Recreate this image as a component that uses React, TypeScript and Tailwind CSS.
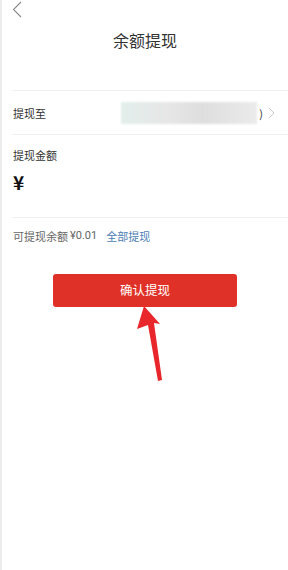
import React from "react";

const font = {
  fontFamily: '"Noto Sans CJK SC", "Noto Sans", sans-serif',
};

export default function App() {
  return (
    <div
      className="relative flex h-[570px] w-[288px] overflow-hidden bg-white"
      style={font}
    >
      {/* left edge strip */}
      <div className="w-[2px] shrink-0 bg-[#ececec]" />

      <div className="flex flex-1 flex-col">
        {/* Header */}
        <header className="flex h-[90px] flex-col">
          <svg
            width="12"
            height="17"
            viewBox="0 0 12 17"
            className="ml-[9px] mt-[1px]"
          >
            <path
              d="M10 1 L2.5 8.5 L10 16"
              fill="none"
              stroke="#8a8a8a"
              strokeWidth="1.1"
            />
          </svg>
          <h1 className="mt-[11px] text-center text-[16px] leading-[22px] text-[#333333]">
            余额提现
          </h1>
        </header>

        <div className="ml-[10px]">
          <div className="h-px bg-[#f0f0f0]" />

          {/* 提现至 */}
          <div className="flex h-[43px] items-center pl-px pr-[13px]">
            <span className="text-[11px] leading-4 text-[#333333]">提现至</span>
            <div className="ml-auto h-[22px] w-[136px] bg-[linear-gradient(90deg,#e3efec_0%,#e6e6e6_35%,#dedede_60%,#ebebeb_100%)] blur-[1px]" />
            <span className="ml-[2px] text-[11px] leading-4 text-[#333333]">)</span>
            <svg width="7" height="12" viewBox="0 0 7 12" className="ml-[5px]">
              <path
                d="M1 1 L6 6 L1 11"
                fill="none"
                stroke="#c8c8c8"
                strokeWidth="1"
              />
            </svg>
          </div>

          <div className="h-px bg-[#f0f0f0]" />

          {/* 提现金额 */}
          <div className="flex h-[82px] flex-col pl-px pt-[12px]">
            <span className="text-[11px] leading-4 text-[#333333]">提现金额</span>
            <span className="mt-[9px] text-[19px] font-bold leading-5 text-[#111111]">
              ¥
            </span>
          </div>

          <div className="h-px bg-[#f0f0f0]" />

          <div className="flex items-center pl-px pt-[10px] text-[11px] leading-4">
            <span className="text-[#666666]">可提现余额</span>
            <span className="ml-[2px] text-[#666666]" style={{ fontFamily: "Roboto, sans-serif" }}>
              ¥0.01
            </span>
            <span className="ml-[9px] text-[#4d7db3]">全部提现</span>
          </div>
        </div>

        {/* Confirm button */}
        <div className="mt-[30px] flex justify-center">
          <button className="flex h-[33px] w-[184px] items-center justify-center rounded-[3px] bg-[#df3127] text-[12.5px] text-white">
            确认提现
          </button>
        </div>
      </div>

      {/* red annotation arrow */}
      <svg
        width="288"
        height="570"
        viewBox="0 0 288 570"
        className="pointer-events-none absolute left-0 top-0"
      >
        <polygon
          points="144,306 137,329 148,325 158,381 162,380 154,323 160,324"
          fill="#e8262b"
        />
      </svg>
    </div>
  );
}
